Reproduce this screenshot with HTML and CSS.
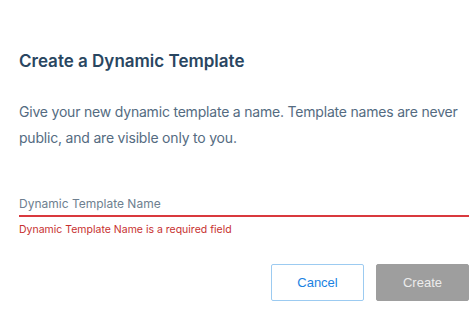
FILE: index.html
```html
<html>
	<head>
		<link rel="stylesheet" href="styles.css">
	</head>
	<body>
		<div class='dialog'>
			<h1 class='title'>Create a Dynamic Template</h1>
			<p class='intro'>Give your new dynamic template a name. Template names are never public, and are visible only to you.</p>
			<div class='field error'>
				<input class='field-input' type='text' placeholder='Dynamic Template Name'>
				<div class='field-message'>Dynamic Template Name is a required field</div>
			</div>
			<div class='actions'>
				<button class='btn btn-secondary'>Cancel</button>
				<button class='btn btn-primary' disabled>Create</button>
			</div>
		</div>
	</body>
</html>
```

FILE: styles.css
```css
html body {
	margin: 0;
	background-color: #fff;
	font-family: "Inter", "Open Sans", sans-serif;
}

.dialog {
	padding: 48px 5px 0 19px;
}

.title {
	margin: 0;
	font-size: 17px;
	line-height: 26px;
	font-weight: 600;
	color: #294661;
}

.intro {
	margin: 25px 0 0;
	font-size: 14px;
	letter-spacing: -0.2px;
	line-height: 26px;
	color: #546b81;
}

.field {
	margin-top: 46px;
}

.field-input {
	display: block;
	width: 100%;
	box-sizing: border-box;
	border: 0;
	border-bottom: 2px solid #d8d8d8;
	padding: 0 0 4px;
	font-family: inherit;
	font-size: 12px;
	line-height: 14px;
	color: #294661;
	outline: none;
}

.field-input::placeholder {
	color: #6e7f90;
}

.field.error .field-input {
	border-bottom-color: #d9393e;
}

.field-message {
	margin-top: 5px;
	font-size: 10.5px;
	line-height: 16px;
	color: #c7302f;
}

.actions {
	display: flex;
	justify-content: flex-end;
	gap: 12px;
	margin-top: 26px;
}

.btn {
	width: 93px;
	height: 37px;
	border-radius: 2px;
	font-family: "Liberation Sans", sans-serif;
	font-size: 13px;
	cursor: pointer;
}

.btn-secondary {
	background-color: #fff;
	border: 1px solid #9ccbf1;
	color: #1a82e2;
}

.btn-primary {
	background-color: #9e9e9e;
	border: 1px solid #9e9e9e;
	color: #ececec;
}
```
